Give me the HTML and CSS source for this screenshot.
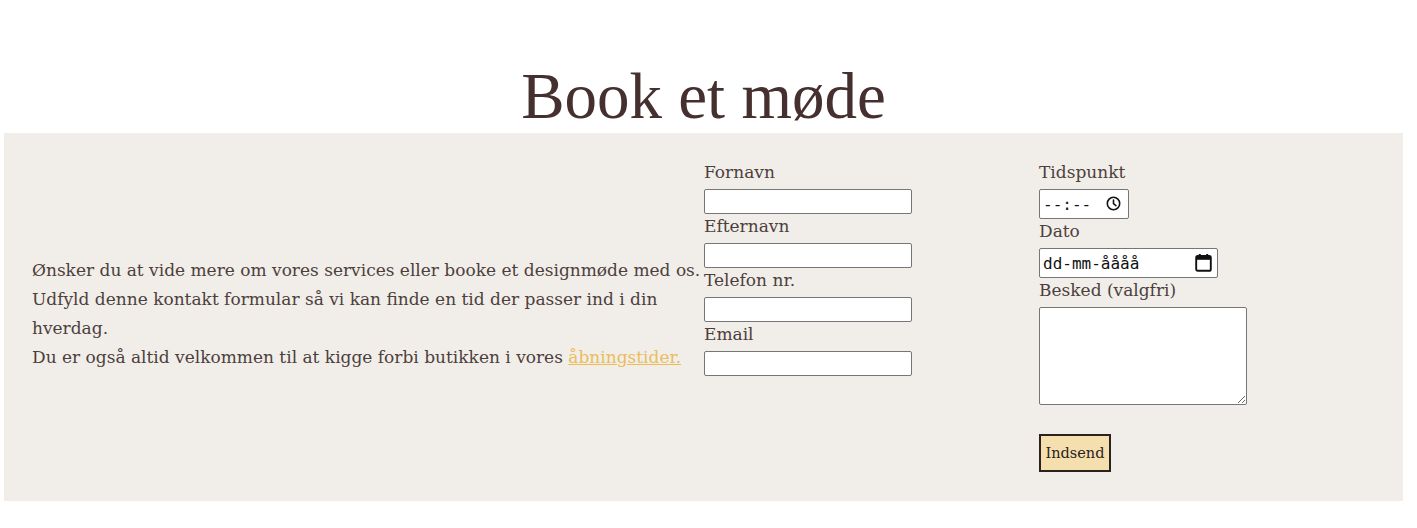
FILE: index.html
```html
<!DOCTYPE html>
<html lang="da">
<head>
<meta charset="utf-8">
<title>Book et møde</title>
<link rel="stylesheet" href="styles.css">
</head>
<body>
<main class="page">
  <h1 class="title">Book et møde</h1>
  <section class="booking">
    <div class="intro">
      <p>Ønsker du at vide mere om vores services eller booke et designmøde med os.<br>Udfyld denne kontakt formular så vi kan finde en tid der passer ind i din hverdag.<br>Du er også altid velkommen til at kigge forbi butikken i vores <a href="#" class="link">åbningstider.</a></p>
    </div>
    <div class="col">
      <label class="label" for="fn">Fornavn</label>
      <input class="field" id="fn" type="text">
      <label class="label" for="en">Efternavn</label>
      <input class="field" id="en" type="text">
      <label class="label" for="tl">Telefon nr.</label>
      <input class="field" id="tl" type="text">
      <label class="label" for="em">Email</label>
      <input class="field" id="em" type="text">
    </div>
    <div class="col">
      <label class="label" for="tp">Tidspunkt</label>
      <div class="picker picker-time">
        <input class="pick-input" id="tp" type="text" placeholder="--:--">
        <svg class="pick-icon" width="15" height="15" viewBox="0 0 15 15"><circle cx="7.5" cy="7.5" r="6.2" fill="none" stroke="#111" stroke-width="1.6"/><path d="M7.5 4V7.7L9.9 9.6" fill="none" stroke="#111" stroke-width="1.6" stroke-linecap="round"/></svg>
      </div>
      <label class="label" for="dt">Dato</label>
      <div class="picker picker-date">
        <input class="pick-input" id="dt" type="text" placeholder="dd-mm-åååå">
        <svg class="pick-icon" width="17" height="19" viewBox="0 0 17 19"><rect x="1.2" y="3" width="14.6" height="14.8" rx="1.6" fill="none" stroke="#111" stroke-width="1.9"/><rect x="1.2" y="3" width="14.6" height="3.8" fill="#111"/><path d="M4.8 1V4M12.2 1V4" stroke="#111" stroke-width="1.9"/></svg>
      </div>
      <label class="label" for="bs">Besked (valgfri)</label>
      <textarea class="message" id="bs"></textarea>
      <button class="submit" type="submit">Indsend</button>
    </div>
  </section>
</main>
</body>
</html>
```
FILE: styles.css
```css
html, body {
  margin: 0;
  background: #ffffff;
}
.page {
  padding: 0 14px 0 4px;
}
.title {
  margin: 64px 0 4px;
  font-family: "Liberation Serif", "Times New Roman", serif;
  font-weight: 400;
  font-size: 65px;
  line-height: 65px;
  text-align: center;
  color: #45302f;
}
.booking {
  display: grid;
  grid-template-columns: 672px 335px 1fr;
  padding: 29px 0 29px 28px;
  background: #f1eeea;
  font-family: "DejaVu Serif", serif;
  color: #4d3f3c;
}
.intro {
  align-self: center;
  padding-bottom: 6px;
}
.intro p {
  margin: 0;
  font-size: 17px;
  line-height: 29px;
}
.link {
  color: #ebbd5a;
}
.col {
  display: flex;
  flex-direction: column;
  align-items: flex-start;
}
.label {
  display: block;
  font-size: 17px;
  line-height: 21px;
  padding-bottom: 6px;
}
.field {
  box-sizing: border-box;
  width: 208px;
  height: 25px;
  margin: 0 0 2px;
  border: 1px solid #767676;
  border-radius: 2px;
  background: #fff;
  padding: 1px 2px;
}
.picker {
  position: relative;
  box-sizing: border-box;
  height: 30px;
  margin-bottom: 2px;
  border: 1px solid #767676;
  border-radius: 2px;
  background: #fff;
}
.picker-time { width: 90px; }
.picker-date { width: 179px; }
.pick-input {
  box-sizing: border-box;
  width: 100%;
  height: 100%;
  border: 0;
  padding: 0 0 0 3px;
  background: transparent;
  font-family: "DejaVu Sans Mono", monospace;
  font-size: 16px;
  color: #111;
}
.pick-input::placeholder {
  color: #111;
  opacity: 1;
}
.picker-time .pick-icon {
  position: absolute;
  right: 7px;
  top: 6px;
}
.picker-date .pick-icon {
  position: absolute;
  right: 5px;
  top: 4px;
}
.message {
  box-sizing: border-box;
  width: 208px;
  height: 98px;
  margin: 0;
  border: 1px solid #767676;
  border-radius: 2px;
  background: #fff;
}
.submit {
  box-sizing: border-box;
  margin-top: 29px;
  height: 38px;
  width: 72px;
  padding: 0;
  border: 2px solid #2b2220;
  background: #f5dfae;
  font-family: "DejaVu Serif", serif;
  font-size: 14.5px;
  color: #2b2220;
}
```
